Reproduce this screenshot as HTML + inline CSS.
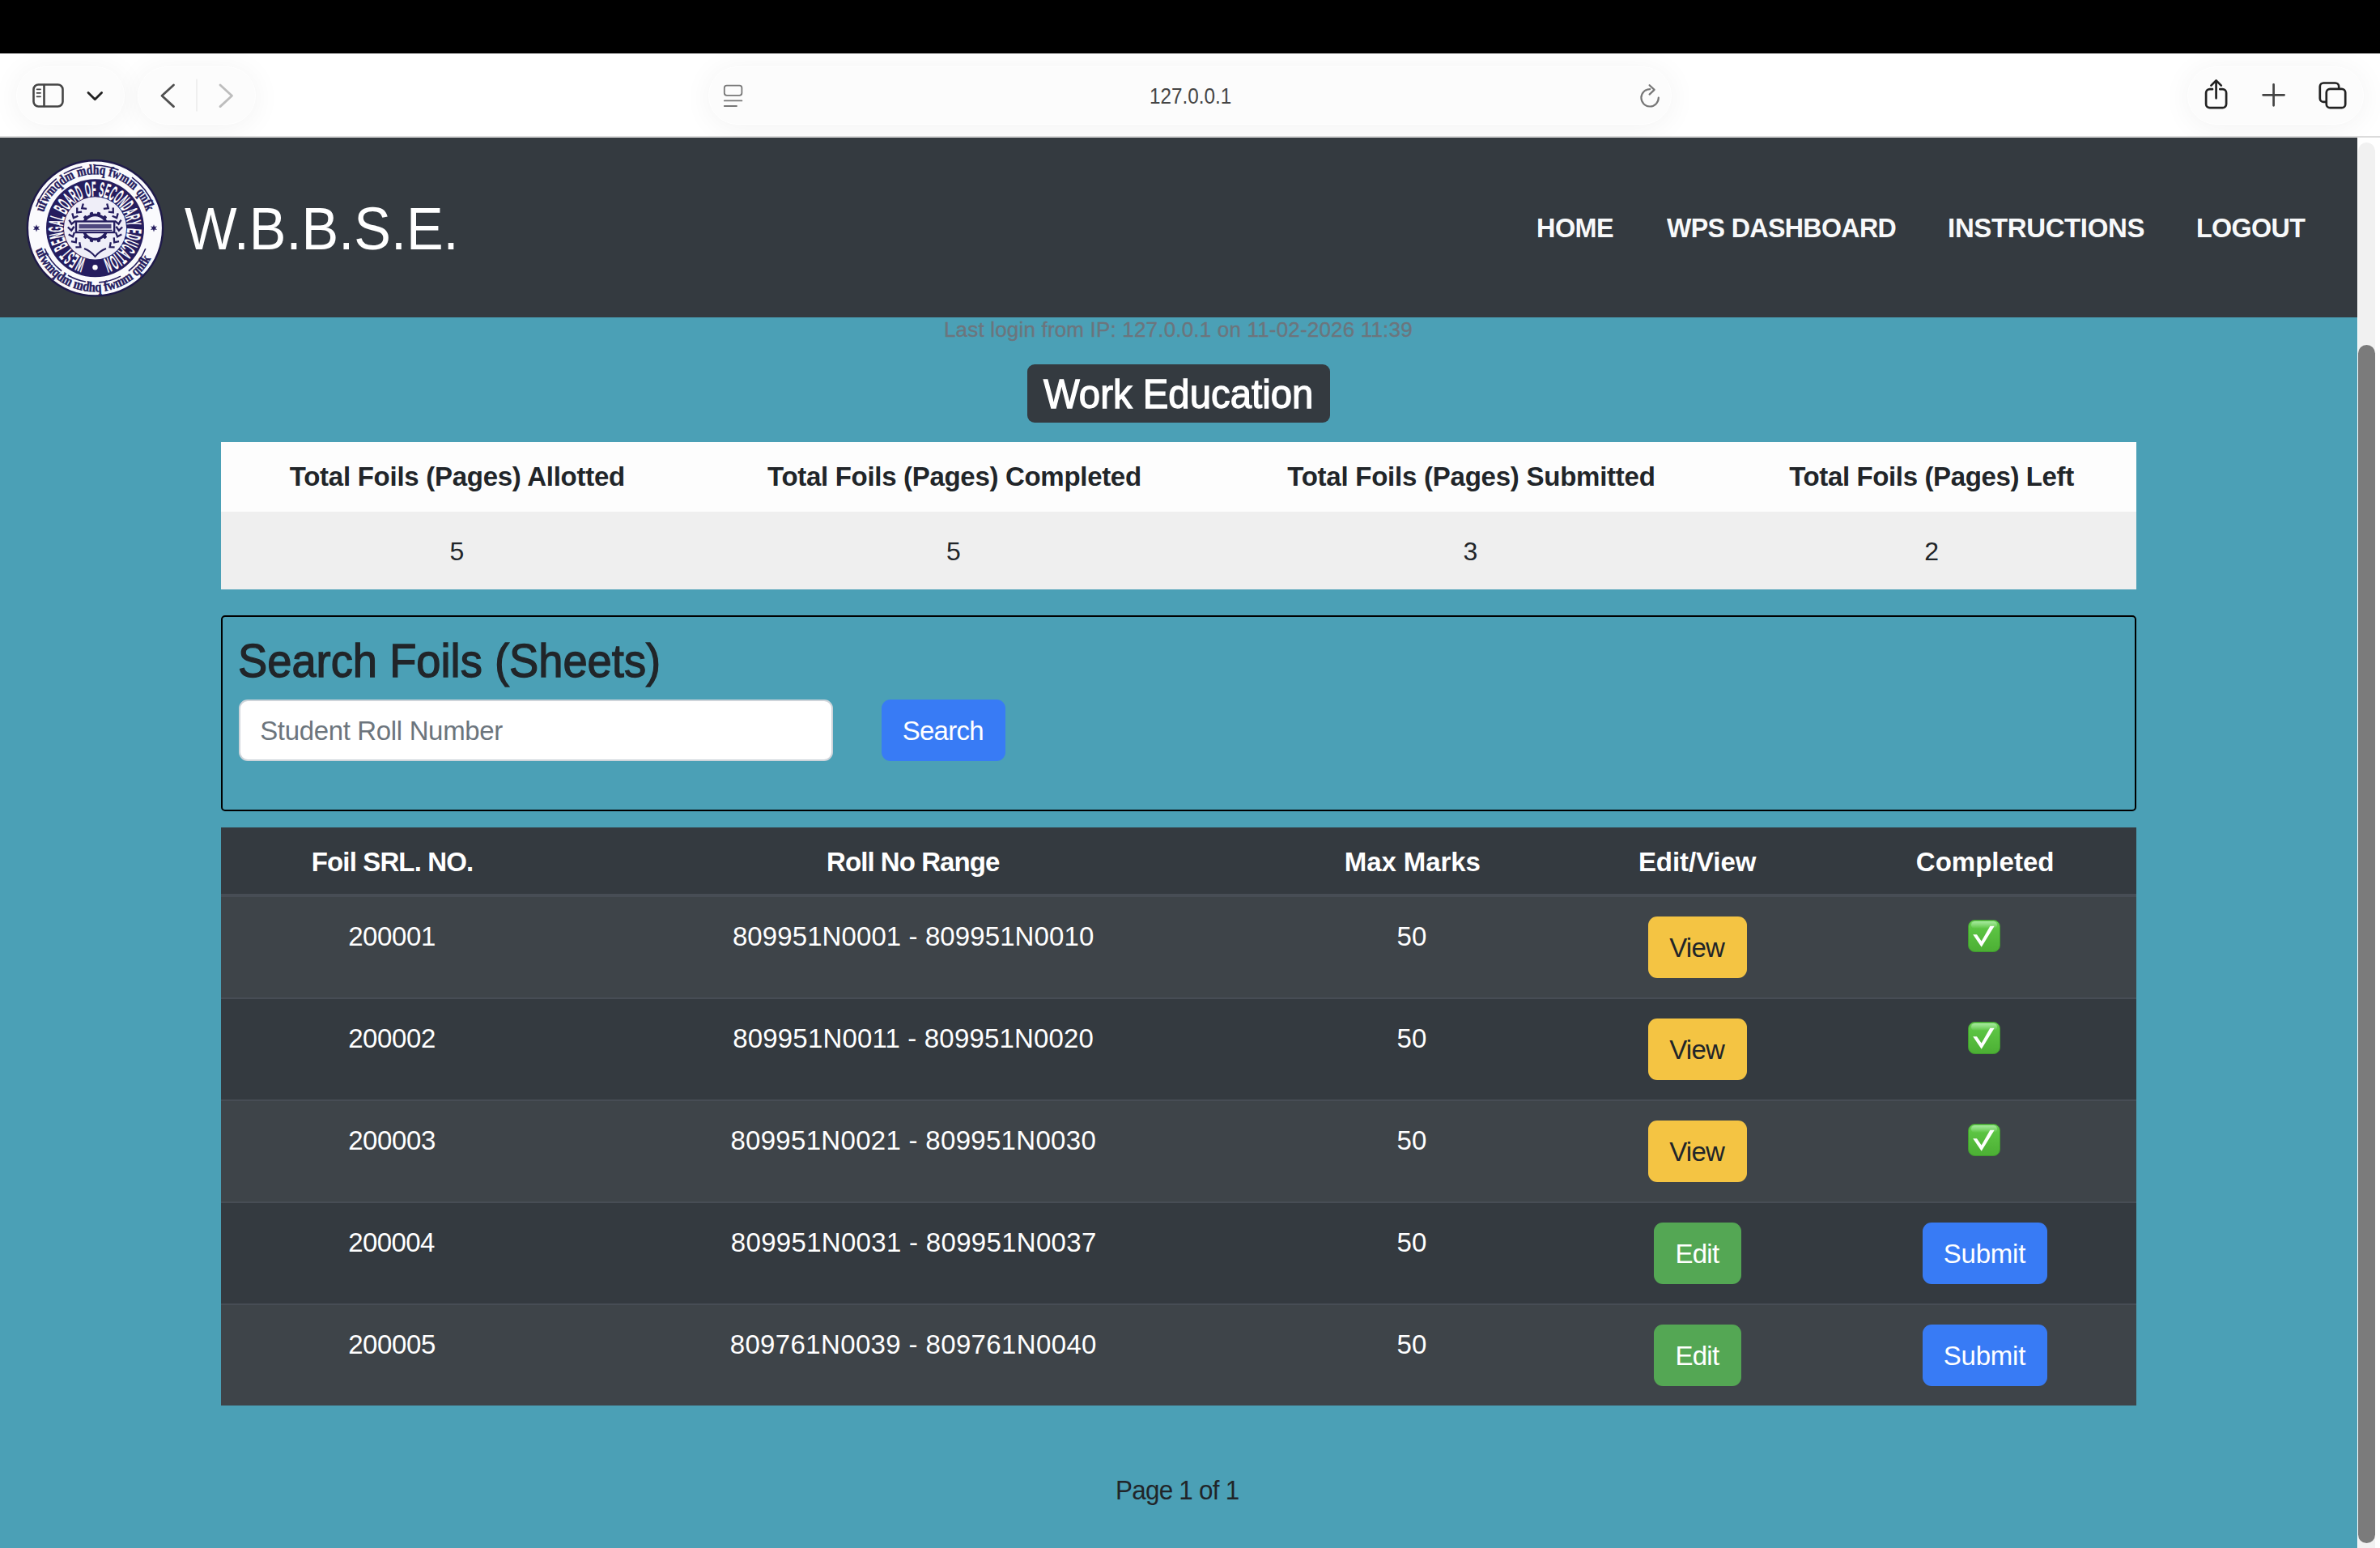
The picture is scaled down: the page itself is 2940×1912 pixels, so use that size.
<!DOCTYPE html>
<html><head><meta charset="utf-8">
<style>
*{box-sizing:border-box;margin:0;padding:0}
html,body{width:2940px;height:1912px;overflow:hidden;background:#fff;font-family:"Liberation Sans",sans-serif}
.a{position:absolute}
.t{position:absolute;white-space:nowrap;line-height:1;font-family:"Liberation Sans",sans-serif}
.pill{position:absolute;background:#fcfcfc;border:1.5px solid #fff;border-radius:36px;box-shadow:0 3px 36px rgba(0,0,0,0.055)}
svg{position:absolute;left:0;top:0;overflow:visible}
</style></head><body>
<!-- browser chrome -->
<div class="a" style="left:0;top:0;width:2940px;height:66px;background:#000"></div>
<div class="a" style="left:0;top:66px;width:2940px;height:102px;background:#fff"></div>
<div class="a" style="left:0;top:168px;width:2940px;height:2px;background:#dcdcdc"></div>
<div class="pill" style="left:20px;top:82px;width:134px;height:72px"></div>
<div class="pill" style="left:170px;top:82px;width:146px;height:72px"></div>
<div class="pill" style="left:875px;top:82px;width:1190px;height:72px"></div>
<div class="pill" style="left:2702px;top:82px;width:218px;height:72px"></div>
<svg width="2940" height="170" style="width:2940px;height:170px">
 <g fill="none" stroke-linecap="round" stroke-linejoin="round">
  <rect x="41.5" y="104.5" width="36" height="27" rx="6" stroke="#454545" stroke-width="2.6"/>
  <line x1="54.5" y1="105" x2="54.5" y2="131" stroke="#454545" stroke-width="2.6"/>
  <path d="M45.6 110.3H50M45.6 114.8H50M45.6 119.3H50" stroke="#454545" stroke-width="1.8"/>
  <path d="M109 114.5L117.3 122.8L125.6 114.5" stroke="#222" stroke-width="2.8"/>
  <path d="M214.5 105L200 118.3L214.5 131.6" stroke="#505050" stroke-width="2.8"/>
  <line x1="243" y1="98" x2="243" y2="137" stroke="#e6e6e6" stroke-width="1.2"/>
  <path d="M272 105L286.5 118.3L272 131.6" stroke="#bdbdbd" stroke-width="2.8"/>
  <rect x="894.8" y="105.6" width="21.6" height="12.2" rx="3" stroke="#777" stroke-width="1.8"/>
  <path d="M894.8 124.4H916.4M894.8 131H910" stroke="#777" stroke-width="1.8"/>
  <path d="M2038.2 110.1A10.7 10.7 0 1 0 2048.8 120.5" stroke="#777" stroke-width="2.2"/>
  <path d="M2037.6 105.2L2043.6 110.9L2037.6 116.6" stroke="#777" stroke-width="2.2"/>
  <path d="M2733 110.2H2729.7A4.6 4.6 0 0 0 2725.1 114.8V128.6A4.6 4.6 0 0 0 2729.7 133.2H2745.5A4.6 4.6 0 0 0 2750.1 128.6V114.8A4.6 4.6 0 0 0 2745.5 110.2H2742.3" stroke="#222" stroke-width="2.7"/>
  <path d="M2737.6 121.3V99.8M2731.4 105.6L2737.6 99.4L2743.8 105.6" stroke="#222" stroke-width="2.7"/>
  <path d="M2795.6 117.3H2821.6M2808.6 104.3V130.3" stroke="#444" stroke-width="2.7"/>
  <rect x="2865.8" y="102.5" width="23.4" height="23.4" rx="4.5" stroke="#222" stroke-width="2.7"/>
  <rect x="2873.8" y="109.8" width="23.4" height="23.4" rx="4.5" fill="#fcfcfc" stroke="#222" stroke-width="2.7"/>
 </g>
</svg>

<!-- page -->
<div class="a" style="left:0;top:170px;width:2912px;height:222px;background:#343a40"></div>
<div class="a" style="left:0;top:392px;width:2912px;height:1520px;background:#4ba0b6"></div>
<div class="a" style="left:2912px;top:170px;width:28px;height:1742px;background:#fff"></div>
<div class="a" style="left:2913px;top:176px;width:21px;height:1736px;background:#f1f1f1;border-radius:10.5px 10.5px 0 0"></div>
<div class="a" style="left:2912.5px;top:426px;width:21.5px;height:1480px;background:#7b7b7b;border-radius:10.75px"></div>

<!-- logo -->
<svg width="2940" height="400" style="width:2940px;height:400px">
<defs>
<path id="ringE" d="M106.58 319.87A39.6 39.6 0 0 1 111.99 242.59 A39.6 39.6 0 0 1 127.08 320.22"/>
<path id="ringBT" d="M53.91 262.36A66.5 66.5 0 0 1 181.09 262.36"/>
<path id="ringBB" d="M43.73 308.65A78.5 78.5 0 0 0 191.27 308.65"/>
</defs>
<circle cx="117.5" cy="281.8" r="83.6" fill="#fafafd" stroke="#1f1a4a" stroke-width="2.4"/>
<circle cx="117.5" cy="281.8" r="60.5" fill="#251d5f"/>
<circle cx="117.5" cy="281.8" r="38.6" fill="#efeef8"/>
<text font-family="Liberation Sans" font-weight="bold" font-size="25.5" fill="#fff" stroke="#fff" stroke-width="0.3"><textPath href="#ringE" textLength="227" lengthAdjust="spacingAndGlyphs">WEST BENGAL BOARD OF SECONDARY EDUCATION</textPath></text>
<circle cx="117.50" cy="330.30" r="3.2" fill="#fff"/>
<text font-family="Liberation Serif" font-weight="bold" font-size="17.5" fill="#251d5f" stroke="#251d5f" stroke-width="0.5"><textPath href="#ringBT" textLength="168" lengthAdjust="spacingAndGlyphs">ufwmqdm mdhq fwmm qnfk</textPath></text>
<path d="M44.67 255.29A77.5 77.5 0 0 1 69.79 220.73 M78.75 214.68A77.5 77.5 0 0 1 101.39 205.99 M117.50 204.30A77.5 77.5 0 0 1 146.53 209.94 M163.05 219.10A77.5 77.5 0 0 1 189.36 252.77" fill="none" stroke="#251d5f" stroke-width="1.6"/>
<text font-family="Liberation Serif" font-weight="bold" font-size="17.5" fill="#251d5f" stroke="#251d5f" stroke-width="0.5"><textPath href="#ringBB" textLength="180" lengthAdjust="spacingAndGlyphs">ufwmqdm mdhq fwmm qnfk</textPath></text>
<path d="M55.19 306.97A67.2 67.2 0 0 0 76.13 334.75 M83.90 340.00A67.2 67.2 0 0 0 105.83 347.98 M122.19 348.84A67.2 67.2 0 0 0 149.05 341.13 M158.87 334.75A67.2 67.2 0 0 0 179.81 306.97" fill="none" stroke="#251d5f" stroke-width="1.6"/>
<polygon points="45.00,277.20 46.00,280.07 48.98,279.50 47.00,281.80 48.98,284.10 46.00,283.53 45.00,286.40 44.00,283.53 41.02,284.10 43.00,281.80 41.02,279.50 44.00,280.07" fill="#251d5f"/>
<polygon points="190.00,277.20 191.00,280.07 193.98,279.50 192.00,281.80 193.98,284.10 191.00,283.53 190.00,286.40 189.00,283.53 186.02,284.10 188.00,281.80 186.02,279.50 189.00,280.07" fill="#251d5f"/>
<path d="M93.39 305.35L99.34 305.05L98.19 299.20" fill="none" stroke="#251d5f" stroke-width="2.3" stroke-linejoin="miter"/>
<path d="M87.97 298.05L93.79 299.35L94.24 293.41" fill="none" stroke="#251d5f" stroke-width="2.3" stroke-linejoin="miter"/>
<path d="M84.71 289.57L89.96 292.37L91.99 286.77" fill="none" stroke="#251d5f" stroke-width="2.3" stroke-linejoin="miter"/>
<path d="M83.82 280.52L88.14 284.63L91.59 279.77" fill="none" stroke="#251d5f" stroke-width="2.3" stroke-linejoin="miter"/>
<path d="M85.39 271.57L88.45 276.68L93.07 272.92" fill="none" stroke="#251d5f" stroke-width="2.3" stroke-linejoin="miter"/>
<path d="M89.29 263.36L90.87 269.10L96.33 266.72" fill="none" stroke="#251d5f" stroke-width="2.3" stroke-linejoin="miter"/>
<path d="M95.24 256.49L95.24 262.45L101.13 261.61" fill="none" stroke="#251d5f" stroke-width="2.3" stroke-linejoin="miter"/>
<path d="M102.82 251.46L101.22 257.20L107.12 257.97" fill="none" stroke="#251d5f" stroke-width="2.3" stroke-linejoin="miter"/>
<path d="M141.61 305.35L135.66 305.05L136.81 299.20" fill="none" stroke="#251d5f" stroke-width="2.3" stroke-linejoin="miter"/>
<path d="M147.03 298.05L141.21 299.35L140.76 293.41" fill="none" stroke="#251d5f" stroke-width="2.3" stroke-linejoin="miter"/>
<path d="M150.29 289.57L145.04 292.37L143.01 286.77" fill="none" stroke="#251d5f" stroke-width="2.3" stroke-linejoin="miter"/>
<path d="M151.18 280.52L146.86 284.63L143.41 279.77" fill="none" stroke="#251d5f" stroke-width="2.3" stroke-linejoin="miter"/>
<path d="M149.61 271.57L146.55 276.68L141.93 272.92" fill="none" stroke="#251d5f" stroke-width="2.3" stroke-linejoin="miter"/>
<path d="M145.71 263.36L144.13 269.10L138.67 266.72" fill="none" stroke="#251d5f" stroke-width="2.3" stroke-linejoin="miter"/>
<path d="M139.76 256.49L139.76 262.45L133.87 261.61" fill="none" stroke="#251d5f" stroke-width="2.3" stroke-linejoin="miter"/>
<path d="M132.18 251.46L133.78 257.20L127.88 257.97" fill="none" stroke="#251d5f" stroke-width="2.3" stroke-linejoin="miter"/>
<path d="M104 307Q112 310 117.5 317Q123 310 131 307" fill="none" stroke="#251d5f" stroke-width="2"/>
<rect x="115.40" y="261.50" width="4.2" height="5" rx="1" fill="#251d5f" transform="rotate(15.0 117.5 280.5)"/>
<rect x="115.40" y="261.50" width="4.2" height="5" rx="1" fill="#251d5f" transform="rotate(45.0 117.5 280.5)"/>
<rect x="115.40" y="261.50" width="4.2" height="5" rx="1" fill="#251d5f" transform="rotate(75.0 117.5 280.5)"/>
<rect x="115.40" y="261.50" width="4.2" height="5" rx="1" fill="#251d5f" transform="rotate(105.0 117.5 280.5)"/>
<rect x="115.40" y="261.50" width="4.2" height="5" rx="1" fill="#251d5f" transform="rotate(135.0 117.5 280.5)"/>
<rect x="115.40" y="261.50" width="4.2" height="5" rx="1" fill="#251d5f" transform="rotate(165.0 117.5 280.5)"/>
<rect x="115.40" y="261.50" width="4.2" height="5" rx="1" fill="#251d5f" transform="rotate(195.0 117.5 280.5)"/>
<rect x="115.40" y="261.50" width="4.2" height="5" rx="1" fill="#251d5f" transform="rotate(225.0 117.5 280.5)"/>
<rect x="115.40" y="261.50" width="4.2" height="5" rx="1" fill="#251d5f" transform="rotate(255.0 117.5 280.5)"/>
<rect x="115.40" y="261.50" width="4.2" height="5" rx="1" fill="#251d5f" transform="rotate(285.0 117.5 280.5)"/>
<rect x="115.40" y="261.50" width="4.2" height="5" rx="1" fill="#251d5f" transform="rotate(315.0 117.5 280.5)"/>
<rect x="115.40" y="261.50" width="4.2" height="5" rx="1" fill="#251d5f" transform="rotate(345.0 117.5 280.5)"/>
<circle cx="117.5" cy="280.5" r="15" fill="none" stroke="#251d5f" stroke-width="3.4"/>
<rect x="94" y="273.5" width="47.2" height="13.5" fill="#efeef8" stroke="#251d5f" stroke-width="2.4"/>
<rect x="97.5" y="276.8" width="40" height="5.5" fill="#251d5f" opacity="0.8"/>
<line x1="97" y1="284.3" x2="138.5" y2="284.3" stroke="#251d5f" stroke-width="1.2"/>
</svg>
<!-- badge -->
<div class="a" style="left:1269px;top:450px;width:374px;height:72px;background:#343a40;border-radius:9px"></div>

<!-- stats table -->
<div class="a" style="left:273px;top:546px;width:2366px;height:86px;background:#fdfdfd"></div>
<div class="a" style="left:273px;top:632px;width:2366px;height:96px;background:#efefef"></div>

<!-- search box -->
<div class="a" style="left:273px;top:760px;width:2366px;height:242px;border:2.2px solid #000;border-radius:5px"></div>
<div class="a" style="left:295px;top:864px;width:734px;height:76px;background:#fff;border:2px solid #ced4da;border-radius:11px"></div>
<div class="a" style="left:1089px;top:864px;width:153px;height:76px;background:#387bf5;border-radius:11px"></div>

<!-- dark table -->
<div class="a" style="left:273px;top:1022px;width:2366px;height:714px;background:#343a40"></div>
<div class="a" style="left:273px;top:1104px;width:2366px;height:4px;background:#474d55"></div>
<div class="a" style="left:273px;top:1108px;width:2366px;height:124px;background:#3e4449"></div>
<div class="a" style="left:273px;top:1232px;width:2366px;height:2px;background:#474d55"></div>
<div class="a" style="left:273px;top:1358px;width:2366px;height:2px;background:#474d55"></div>
<div class="a" style="left:273px;top:1360px;width:2366px;height:124px;background:#3e4449"></div>
<div class="a" style="left:273px;top:1484px;width:2366px;height:2px;background:#474d55"></div>
<div class="a" style="left:273px;top:1610px;width:2366px;height:2px;background:#474d55"></div>
<div class="a" style="left:273px;top:1612px;width:2366px;height:124px;background:#3e4449"></div>

<!-- buttons -->
<div class="a" style="left:2036px;top:1132px;width:122px;height:76px;background:#f4c443;border-radius:11px"></div>
<div class="a" style="left:2036px;top:1258px;width:122px;height:76px;background:#f4c443;border-radius:11px"></div>
<div class="a" style="left:2036px;top:1384px;width:122px;height:76px;background:#f4c443;border-radius:11px"></div>
<div class="a" style="left:2043px;top:1510px;width:108px;height:76px;background:#54a754;border-radius:11px"></div>
<div class="a" style="left:2043px;top:1636px;width:108px;height:76px;background:#54a754;border-radius:11px"></div>
<div class="a" style="left:2375px;top:1510px;width:154px;height:76px;background:#387bf5;border-radius:11px"></div>
<div class="a" style="left:2375px;top:1636px;width:154px;height:76px;background:#387bf5;border-radius:11px"></div>

<!-- check emojis -->
<svg width="2940" height="1912" style="width:2940px;height:1912px">
 <defs>
  <linearGradient id="gg" x1="0" y1="0" x2="0" y2="1">
   <stop offset="0" stop-color="#6fd25a"/>
   <stop offset="0.25" stop-color="#5cc443"/>
   <stop offset="1" stop-color="#4caf34"/>
  </linearGradient>
  <linearGradient id="gh" x1="0" y1="0" x2="0" y2="1">
   <stop offset="0" stop-color="#a8eaa0" stop-opacity="0.95"/>
   <stop offset="1" stop-color="#a8eaa0" stop-opacity="0"/>
  </linearGradient>
  <g id="chk">
   <rect x="0.5" y="0.5" width="39" height="39" rx="8" fill="url(#gg)" stroke="#3f9a2e" stroke-width="1"/>
   <rect x="4" y="2" width="32" height="9" rx="4.5" fill="url(#gh)"/>
   <path d="M6.2 18.2H11L16.7 26.5L27.4 7.7H32.7L16.7 33.7Z" fill="#fff"/>
  </g>
 </defs>
 <use href="#chk" x="2431" y="1136"/>
 <use href="#chk" x="2431" y="1262"/>
 <use href="#chk" x="2431" y="1388"/>
</svg>

<div class="t" style="left:228.00px;top:246.10px;font-size:74px;font-weight:normal;color:#fff;letter-spacing:0.000px;transform:scaleX(0.9251);transform-origin:0 0;">W.B.B.S.E.</div>
<div class="t" style="left:1897.83px;top:265.10px;font-size:33px;font-weight:bold;color:#f8f9fa;letter-spacing:-0.536px;transform:scaleX(0.9832);transform-origin:0 0;">HOME</div>
<div class="t" style="left:2058.90px;top:265.10px;font-size:33px;font-weight:bold;color:#f8f9fa;letter-spacing:-0.638px;transform:scaleX(0.9743);transform-origin:0 0;">WPS DASHBOARD</div>
<div class="t" style="left:2406.10px;top:265.10px;font-size:33px;font-weight:bold;color:#f8f9fa;letter-spacing:-0.381px;">INSTRUCTIONS</div>
<div class="t" style="left:2712.65px;top:265.10px;font-size:33px;font-weight:bold;color:#f8f9fa;letter-spacing:-0.627px;transform:scaleX(0.9775);transform-origin:0 0;">LOGOUT</div>
<div class="t" style="left:1420.00px;top:106.20px;font-size:27px;font-weight:normal;color:#454545;letter-spacing:0.000px;transform:scaleX(0.8988);transform-origin:0 0;">127.0.0.1</div>
<div class="t" style="left:1165.97px;top:394.10px;font-size:26px;font-weight:normal;color:#6c757d;letter-spacing:0.180px;-webkit-text-stroke:0.35px #6c757d;">Last login from IP: 127.0.0.1 on 11-02-2026 11:39</div>
<div class="t" style="left:1289.22px;top:462.30px;font-size:50px;font-weight:normal;color:#fff;letter-spacing:0.000px;transform:scaleX(0.9469);transform-origin:0 0;-webkit-text-stroke:1.3px #fff;">Work Education</div>
<div class="t" style="left:357.80px;top:571.80px;font-size:33px;font-weight:bold;color:#212529;letter-spacing:-0.272px;">Total Foils (Pages) Allotted</div>
<div class="t" style="left:948.00px;top:571.80px;font-size:33px;font-weight:bold;color:#212529;letter-spacing:-0.305px;">Total Foils (Pages) Completed</div>
<div class="t" style="left:1590.20px;top:571.80px;font-size:33px;font-weight:bold;color:#212529;letter-spacing:-0.242px;">Total Foils (Pages) Submitted</div>
<div class="t" style="left:2210.20px;top:571.80px;font-size:33px;font-weight:bold;color:#212529;letter-spacing:-0.374px;">Total Foils (Pages) Left</div>
<div class="t" style="left:555.50px;top:665.00px;font-size:32px;font-weight:normal;color:#212529;letter-spacing:0.000px;">5</div>
<div class="t" style="left:1168.95px;top:665.00px;font-size:32px;font-weight:normal;color:#212529;letter-spacing:0.000px;">5</div>
<div class="t" style="left:1807.45px;top:665.00px;font-size:32px;font-weight:normal;color:#212529;letter-spacing:0.000px;">3</div>
<div class="t" style="left:2377.20px;top:665.00px;font-size:32px;font-weight:normal;color:#212529;letter-spacing:0.000px;">2</div>
<div class="t" style="left:294.31px;top:788.10px;font-size:57px;font-weight:normal;color:#212529;letter-spacing:0.000px;transform:scaleX(0.9527);transform-origin:0 0;-webkit-text-stroke:1.3px #212529;">Search Foils (Sheets)</div>
<div class="t" style="left:321.20px;top:886.10px;font-size:33px;font-weight:normal;color:#6c757d;letter-spacing:-0.346px;">Student Roll Number</div>
<div class="t" style="left:1114.70px;top:886.30px;font-size:33px;font-weight:normal;color:#fff;letter-spacing:-0.721px;">Search</div>
<div class="t" style="left:384.80px;top:1048.10px;font-size:33px;font-weight:bold;color:#fff;letter-spacing:-0.871px;">Foil SRL. NO.</div>
<div class="t" style="left:1021.10px;top:1048.10px;font-size:33px;font-weight:bold;color:#fff;letter-spacing:-0.946px;">Roll No Range</div>
<div class="t" style="left:1660.80px;top:1048.10px;font-size:33px;font-weight:bold;color:#fff;letter-spacing:-0.088px;">Max Marks</div>
<div class="t" style="left:2023.90px;top:1048.10px;font-size:33px;font-weight:bold;color:#fff;letter-spacing:-0.079px;">Edit/View</div>
<div class="t" style="left:2366.80px;top:1048.10px;font-size:33px;font-weight:bold;color:#fff;letter-spacing:0.018px;">Completed</div>
<div class="t" style="left:430.15px;top:1140.20px;font-size:33px;font-weight:normal;color:#fff;letter-spacing:-0.373px;">200001</div>
<div class="t" style="left:904.90px;top:1140.20px;font-size:33px;font-weight:normal;color:#fff;letter-spacing:0.096px;">809951N0001 - 809951N0010</div>
<div class="t" style="left:1725.62px;top:1140.20px;font-size:33px;font-weight:normal;color:#fff;letter-spacing:0.000px;">50</div>
<div class="t" style="left:2062.25px;top:1154.00px;font-size:33px;font-weight:normal;color:#212529;letter-spacing:-0.800px;">View</div>
<div class="t" style="left:430.15px;top:1266.20px;font-size:33px;font-weight:normal;color:#fff;letter-spacing:-0.373px;">200002</div>
<div class="t" style="left:905.30px;top:1266.20px;font-size:33px;font-weight:normal;color:#fff;letter-spacing:0.165px;">809951N0011 - 809951N0020</div>
<div class="t" style="left:1725.62px;top:1266.20px;font-size:33px;font-weight:normal;color:#fff;letter-spacing:0.000px;">50</div>
<div class="t" style="left:2062.25px;top:1280.00px;font-size:33px;font-weight:normal;color:#212529;letter-spacing:-0.800px;">View</div>
<div class="t" style="left:430.15px;top:1392.20px;font-size:33px;font-weight:normal;color:#fff;letter-spacing:-0.373px;">200003</div>
<div class="t" style="left:902.40px;top:1392.20px;font-size:33px;font-weight:normal;color:#fff;letter-spacing:0.304px;">809951N0021 - 809951N0030</div>
<div class="t" style="left:1725.62px;top:1392.20px;font-size:33px;font-weight:normal;color:#fff;letter-spacing:0.000px;">50</div>
<div class="t" style="left:2062.25px;top:1406.00px;font-size:33px;font-weight:normal;color:#212529;letter-spacing:-0.800px;">View</div>
<div class="t" style="left:430.15px;top:1518.20px;font-size:33px;font-weight:normal;color:#fff;letter-spacing:-0.573px;">200004</div>
<div class="t" style="left:902.85px;top:1518.20px;font-size:33px;font-weight:normal;color:#fff;letter-spacing:0.308px;">809951N0031 - 809951N0037</div>
<div class="t" style="left:1725.62px;top:1518.20px;font-size:33px;font-weight:normal;color:#fff;letter-spacing:0.000px;">50</div>
<div class="t" style="left:2069.45px;top:1532.00px;font-size:33px;font-weight:normal;color:#fff;letter-spacing:-0.732px;">Edit</div>
<div class="t" style="left:2400.85px;top:1532.10px;font-size:33px;font-weight:normal;color:#fff;letter-spacing:-0.248px;">Submit</div>
<div class="t" style="left:430.15px;top:1644.20px;font-size:33px;font-weight:normal;color:#fff;letter-spacing:-0.373px;">200005</div>
<div class="t" style="left:901.70px;top:1644.20px;font-size:33px;font-weight:normal;color:#fff;letter-spacing:0.363px;">809761N0039 - 809761N0040</div>
<div class="t" style="left:1725.62px;top:1644.20px;font-size:33px;font-weight:normal;color:#fff;letter-spacing:0.000px;">50</div>
<div class="t" style="left:2069.45px;top:1658.00px;font-size:33px;font-weight:normal;color:#fff;letter-spacing:-0.732px;">Edit</div>
<div class="t" style="left:2400.85px;top:1658.10px;font-size:33px;font-weight:normal;color:#fff;letter-spacing:-0.248px;">Submit</div>
<div class="t" style="left:1378.40px;top:1823.80px;font-size:33px;font-weight:normal;color:#212529;letter-spacing:-0.791px;transform:scaleX(0.9522);transform-origin:0 0;">Page 1 of 1</div>
<script>(function(){var w=window.innerWidth;if(w&&Math.abs(w-2940)>1){document.documentElement.style.zoom=w/2940;}})();</script>
</body></html>
